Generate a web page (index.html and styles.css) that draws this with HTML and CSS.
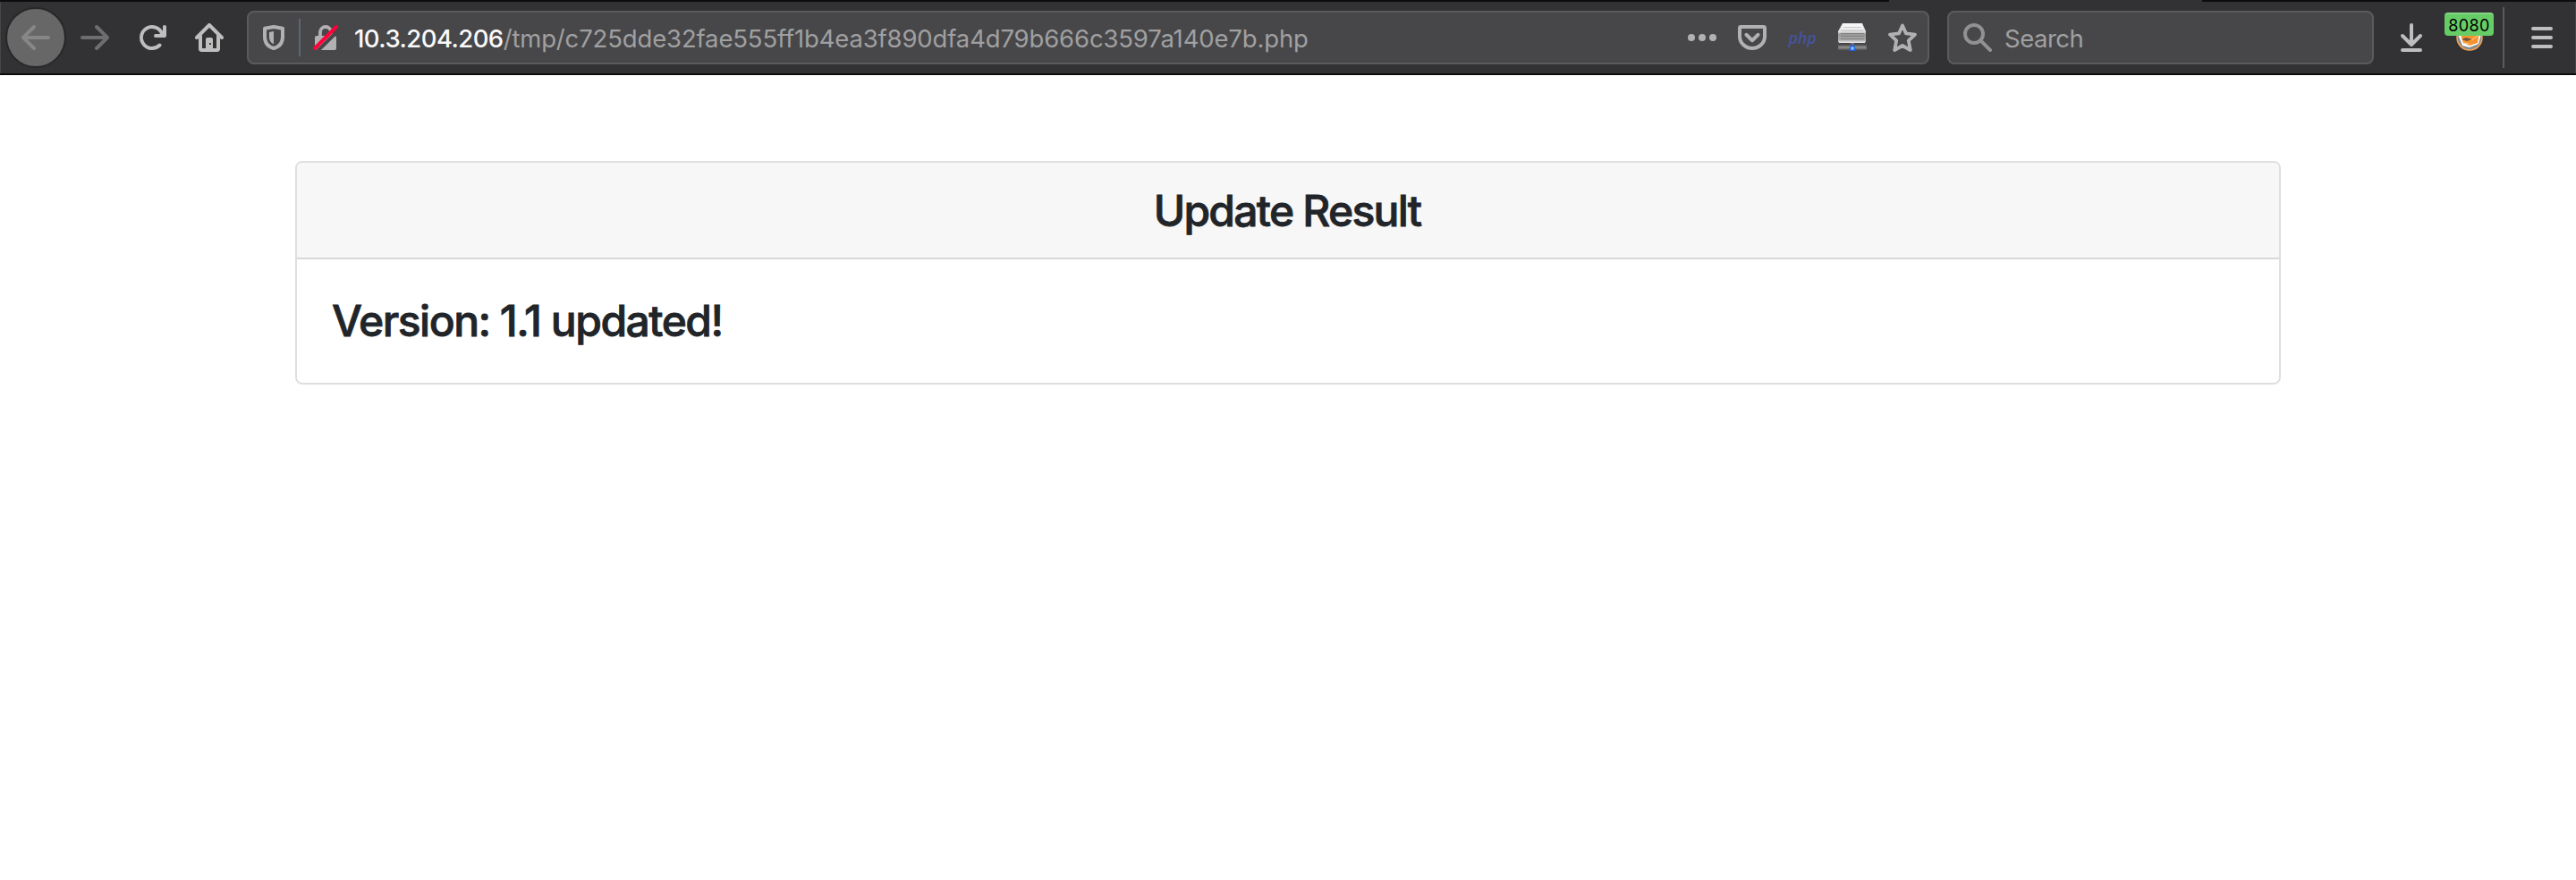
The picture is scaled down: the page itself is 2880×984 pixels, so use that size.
FILE: index.html
```html
<!DOCTYPE html>
<html lang="en">
<head>
<meta charset="utf-8">
<title>Update Result</title>
<link rel="stylesheet" href="styles.css">
</head>
<body>
<header class="chrome">
  <div class="tab-edge"><i class="edge-left"></i><i class="edge-right"></i></div>
  <nav class="toolbar">
    <span class="back"><svg class="icon" viewBox="0 0 16 16"><path d="M15 7H3.414l4.293-4.293a1 1 0 0 0-1.414-1.414l-6 6a1 1 0 0 0 0 1.414l6 6a1 1 0 0 0 1.414-1.414L3.414 9H15a1 1 0 0 0 0-2z"/></svg></span>
    <svg class="icon forward" viewBox="0 0 16 16"><path transform="matrix(-1 0 0 1 16 0)" d="M15 7H3.414l4.293-4.293a1 1 0 0 0-1.414-1.414l-6 6a1 1 0 0 0 0 1.414l6 6a1 1 0 0 0 1.414-1.414L3.414 9H15a1 1 0 0 0 0-2z"/></svg>
    <svg class="icon reload" viewBox="0 0 16 16"><path d="M15 1a1 1 0 0 0-1 1v2.418A6.995 6.995 0 1 0 8 15a6.954 6.954 0 0 0 4.95-2.05 1 1 0 0 0-1.414-1.414A5.019 5.019 0 1 1 12.549 6H10a1 1 0 0 0 0 2h5a1 1 0 0 0 1-1V2a1 1 0 0 0-1-1z"/></svg>
    <svg class="icon home" viewBox="0 0 16 16"><path fill="none" stroke="currentColor" stroke-width="2" stroke-linecap="round" stroke-linejoin="round" d="M1 8l7-7 7 7M3 7v7.3q0 .7.7.7h8.6q.7 0 .7-.7V7"/><path fill-rule="evenodd" d="M6 14.5V9a1 1 0 0 1 1-1h2a1 1 0 0 1 1 1v5.500zM8 11v1h.9v-1z"/></svg>
    <div class="field urlbar">
      <svg class="icon shield" viewBox="0 0 16 16"><path fill="none" stroke="currentColor" stroke-width="2" stroke-linejoin="round" d="M8 2L3 2.900V7.500C3 11 5 13.200 8 14c3-.8 5-3 5-6.500V2.900z"/><path d="M8 4.500L5.500 5v2.600C5.500 9.600 6.300 11 8 11.600z"/></svg>
      <i class="field-rule"></i>
      <svg class="icon lock" viewBox="0 0 16 16"><path fill="none" stroke="currentColor" stroke-width="1.900" d="M5 8V5a3 3 0 0 1 6 0v3"/><path d="M3 7h10a1 1 0 0 1 1 1v6a1 1 0 0 1-1 1H3a1 1 0 0 1-1-1V8a1 1 0 0 1 1-1z"/><path stroke="#474749" stroke-width="2" d="M3.200 15.800L15.200 4"/><path stroke="#ff0039" stroke-width="2" stroke-linecap="round" d="M2 14L14 2"/></svg>
      <span class="address"><b>10.3.204.206</b>/tmp/c725dde32fae555ff1b4ea3f890dfa4d79b666c3597a140e7b.php</span>
      <div class="actions">
        <svg class="icon" viewBox="0 0 16 16"><circle cx="2" cy="8" r="2"/><circle cx="8" cy="8" r="2"/><circle cx="14" cy="8" r="2"/></svg>
        <svg class="icon" viewBox="0 0 16 16"><g fill="none" stroke="currentColor" stroke-width="2" stroke-linecap="round" stroke-linejoin="round"><path d="M1.700 2h12.600q.7 0 .7.700V7.200a7 6.800 0 0 1-14 0V2.700Q1 2 1.700 2z"/><path d="M4.700 6.400L8 9.600l3.300-3.200"/></g></svg>
        <span class="php">php</span>
        <svg class="icon" viewBox="0 0 32 32">
          <defs><linearGradient id="drive" x1="0" y1="0" x2="0" y2="1"><stop offset="0" stop-color="#eee"/><stop offset=".45" stop-color="#ddd"/><stop offset=".55" stop-color="#999"/><stop offset=".85" stop-color="#aaa"/><stop offset="1" stop-color="#eee"/></linearGradient></defs>
          <path fill="url(#drive)" d="M5 0h22l4 9v11l-1 2H1l-1-2V9z"/>
          <path fill="#f7f7f7" d="M6 1h20l2 5H4z"/>
          <path stroke="#c6c6c6" d="M6 4.500h20M4 8.500h24"/>
          <path stroke="#808080" d="M3 11.500h26M3 14.500h26M3 17.500h26"/>
          <path fill="#707070" d="M14 22h4v3h-4zM0 24.500h32v5H0z"/><path stroke="#868686" stroke-width="2" d="M1 27h30"/>
          <path fill="#1f5fd8" d="M14 24h4l2 7h-8z"/><circle cx="16" cy="28" r="2" fill="#83b9ff"/>
        </svg>
        <svg class="icon" viewBox="0 0 16 16"><path fill="none" stroke="currentColor" stroke-width="1.900" stroke-linejoin="round" d="M8 1.200l2 4.500 5 .6-3.600 3.400 1 5.300L8 12.500 3.600 15l1-5.300L1 6.300l5-.6z"/></svg>
      </div>
    </div>
    <div class="field searchbar">
      <svg class="icon glass" viewBox="0 0 16 16"><g fill="none" stroke="currentColor" stroke-width="2" stroke-linecap="round"><circle cx="6" cy="6" r="5"/><path d="M9.700 9.700L15 15"/></g></svg>
      <span class="placeholder">Search</span>
    </div>
    <svg class="icon download" viewBox="0 0 16 16"><g fill="none" stroke="currentColor" stroke-width="2" stroke-linecap="round" stroke-linejoin="round"><path d="M8 1v11M3 7l5 5 5-5M3 15h10"/></g></svg>
    <div class="proxy">
      <svg class="icon" viewBox="0 0 32 32"><circle cx="16" cy="16" r="14" fill="#8b8b8b" stroke="#f3a453" stroke-width="1.500"/><path fill="#fff" d="M3 12l5 13 8 2 10-4 3-11z"/><path fill="#f7922d" d="M5 10h22l-2 12-9 3-7-3z"/><path fill="#6e5543" d="M7 18l5-2 7 2-6 2z"/><path stroke="#fbd2a3" fill="none" d="M18 19l7-5M10 22l6 1"/></svg>
      <span class="badge">8080</span>
    </div>
    <i class="toolbar-rule"></i>
    <svg class="icon menu" viewBox="0 0 16 16"><path stroke="currentColor" stroke-width="2" stroke-linecap="round" d="M3 3h10M3 8h10M3 13h10"/></svg>
  </nav>
</header>
<main class="container">
  <section class="card">
    <h4 class="card-header">Update Result</h4>
    <div class="card-body"><h4 class="version">Version: 1.1 updated!</h4></div>
  </section>
</main>
</body>
</html>
```
FILE: styles.css
```css
* { box-sizing: border-box; }
body { margin: 0; height: 984px; overflow: hidden; background: #fff; color: #212529; font-family: Inter, "Liberation Sans", sans-serif; }
.chrome { height: 84px; background: #323234; border-bottom: 2px solid #0c0c0d; }
.tab-edge { display: flex; justify-content: space-between; height: 2px; }
.edge-left { width: 2112px; background: #0c0c0d; }
.edge-right { width: 418px; background: #0c0c0d; }
.toolbar { display: flex; align-items: center; height: 80px; padding-left: 6px; border-left: 1px solid #464648; border-right: 1px solid #464648; color: #bebebf; }
.icon { display: block; flex: none; width: 32px; height: 32px; fill: currentColor; }
.back { display: flex; align-items: center; justify-content: center; flex: none; width: 68px; height: 68px; border: 2px solid #272728; border-radius: 50%; background: #676767; color: #878787; margin-left: -1px; }
.forward { margin-left: 16px; color: #6e6e6f; }
.reload { margin-left: 32px; }
.home { margin-left: 32px; }
.field { display: flex; align-items: center; flex: none; height: 60px; border: 2px solid #5b5b5d; border-radius: 8px; background: #474749; color: #b1b1b3; }
.urlbar { width: 1881px; margin-left: 26px; padding: 0 12px; }
.field-rule { width: 2px; height: 42px; margin-left: 12px; background: #5d6672; }
.lock { margin-left: 12px; }
.address, .placeholder { padding-top: 2px; font-size: 27.500px; line-height: 36px; white-space: nowrap; color: #a0a0a1; }
.address { margin-left: 16px; letter-spacing: -0.150px; }
.address b { color: #f9f9fa; font-weight: 500; letter-spacing: -0.550px; }
.actions { display: flex; align-items: center; gap: 24px; margin-left: auto; }
.php { width: 32px; text-align: center; font: italic 600 18px/24px "Open Sans", sans-serif; letter-spacing: -0.300px; color: #46539a; }
.searchbar { width: 477px; margin-left: 20px; padding-left: 16px; }
.glass { color: #919192; }
.placeholder { margin-left: 14px; letter-spacing: -0.5px; }
.download { margin-left: 26px; }
.proxy { position: relative; margin-left: 33px; }
.badge { position: absolute; left: -12px; top: -12px; width: 55px; height: 26px; border-radius: 4px; background: #66cc66; border-top: 2px solid #84d684; color: #000; font-size: 18px; line-height: 25px; letter-spacing: 0.400px; text-align: center; }
.toolbar-rule { width: 2px; height: 68px; margin-left: 21px; background: #5b5b5d; }
.menu { margin-left: 26px; }
.container { width: 2220px; margin: 96px auto 0; }
.card { border: 2px solid #dfdfdf; border-radius: 8px; overflow: hidden; }
.card-header, .version { margin: 0; font-size: 48px; font-weight: 500; line-height: 57.600px; -webkit-text-stroke: 0.800px #212529; }
.card-header { padding: 25px 42px 23px 40px; height: 108px; background: #f7f7f7; border-bottom: 2px solid #d8d8d8; text-align: center; letter-spacing: -1.750px; }
.card-body { height: 138px; padding: 40px 39px 0; }
.version { letter-spacing: -1.500px; }
```
